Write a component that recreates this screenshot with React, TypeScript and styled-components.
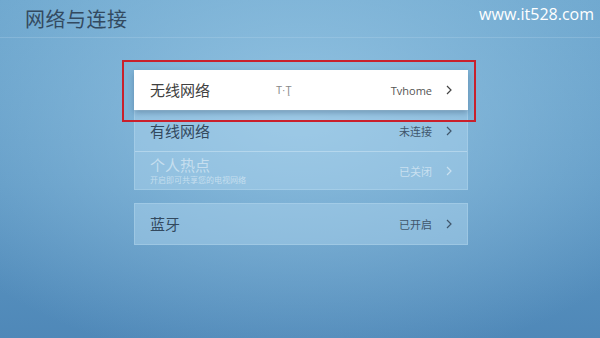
import React from 'react';
import styled, { createGlobalStyle } from 'styled-components';

const GlobalStyle = createGlobalStyle`
  html, body {
    margin: 0;
    padding: 0;
  }
  body {
    font-family: "Noto Sans CJK SC", "Noto Sans", sans-serif;
  }
`;

const Screen = styled.div`
  position: relative;
  width: 600px;
  height: 338px;
  overflow: hidden;
  display: flex;
  flex-direction: column;
  background:
    radial-gradient(ellipse 420px 260px at 300px 110px, rgba(150, 198, 228, 0.9), rgba(150, 198, 228, 0) 100%),
    linear-gradient(180deg, #6aa4cc 0%, #5d97c3 55%, #4f88b8 100%);
`;

const Header = styled.div`
  height: 38px;
  padding: 0 0 0 25px;
  display: flex;
  align-items: center;
  border-bottom: 1px solid rgba(190, 220, 240, 0.25);
  box-sizing: border-box;
`;

const Title = styled.h1`
  margin: 0;
  font-size: 20px;
  font-weight: 400;
  color: #334a60;
  letter-spacing: 0.5px;
`;

const Watermark = styled.div`
  position: absolute;
  top: 3px;
  right: 6px;
  font-family: "Open Sans", "Liberation Sans", sans-serif;
  font-size: 16px;
  color: #ffffff;
`;

const List = styled.div`
  width: 334px;
  margin: 32px 0 0 134px;
  display: flex;
  flex-direction: column;
`;

const FocusItem = styled.div`
  position: relative;
  z-index: 2;
  height: 40px;
  display: flex;
  align-items: center;
  padding: 0 16px;
  background: #ffffff;
  box-shadow: 0 3px 6px rgba(40, 70, 100, 0.35);

  &::after {
    content: '';
    position: absolute;
    top: -10px;
    left: -12px;
    right: -8px;
    bottom: -12px;
    border: 2px solid #c9202c;
  }
`;

const Card = styled.div<{ $gap?: number }>`
  margin-top: ${(p) => p.$gap ?? 0}px;
  background: rgba(170, 210, 235, 0.5);
  border: 1px solid rgba(200, 228, 245, 0.3);
  display: flex;
  flex-direction: column;
`;

const Row = styled.div<{ $h: number; $divider?: boolean }>`
  height: ${(p) => p.$h}px;
  display: flex;
  align-items: center;
  padding: 0 15px;
  border-bottom: ${(p) => (p.$divider ? '1px solid rgba(210, 232, 246, 0.5)' : 'none')};
`;

const LabelBlock = styled.div`
  display: flex;
  flex-direction: column;
  flex: 1;
`;

const Label = styled.span<{ $tone: 'dark' | 'normal' | 'faded' }>`
  font-size: 15px;
  line-height: 18px;
  color: ${(p) => (p.$tone === 'dark' ? '#404040' : p.$tone === 'faded' ? 'rgba(215, 232, 244, 0.75)' : '#33495e')};
`;

const Hint = styled.span`
  font-size: 8px;
  line-height: 10px;
  margin-top: 1px;
  color: rgba(215, 232, 244, 0.75);
`;

const Signal = styled.span`
  position: absolute;
  left: 142px;
  font-family: "Liberation Sans", sans-serif;
  font-size: 10px;
  color: #888;
`;

const Value = styled.span<{ $tone: 'dark' | 'normal' | 'faded' }>`
  font-size: 11px;
  font-family: ${(p) => (p.$tone === 'dark' ? '"Open Sans", "Liberation Sans", sans-serif' : 'inherit')};
  color: ${(p) => (p.$tone === 'dark' ? '#555' : p.$tone === 'faded' ? 'rgba(215, 232, 244, 0.8)' : '#40566b')};
  margin-right: 14px;
`;

const Chevron = ({ color }: { color: string }) => (
  <svg width={6} height={10} viewBox="0 0 6 10">
    <polyline points="1,1 5,5 1,9" fill="none" stroke={color} strokeWidth={1.2} />
  </svg>
);

const App: React.FC = () => {
  return (
    <Screen>
      <GlobalStyle />
      <Header>
        <Title>网络与连接</Title>
      </Header>
      <Watermark>www.it528.com</Watermark>
      <List>
        <FocusItem>
          <Label $tone="dark" style={{ flex: 1 }}>无线网络</Label>
          <Signal>T·Ţ</Signal>
          <Value $tone="dark">Tvhome</Value>
          <Chevron color="#444" />
        </FocusItem>
        <Card>
          <Row $h={40} $divider>
            <LabelBlock>
              <Label $tone="normal">有线网络</Label>
            </LabelBlock>
            <Value $tone="normal">未连接</Value>
            <Chevron color="#40566b" />
          </Row>
          <Row $h={37}>
            <LabelBlock>
              <Label $tone="faded">个人热点</Label>
              <Hint>开启即可共享您的电视网络</Hint>
            </LabelBlock>
            <Value $tone="faded">已关闭</Value>
            <Chevron color="rgba(215, 232, 244, 0.8)" />
          </Row>
        </Card>
        <Card $gap={13}>
          <Row $h={40}>
            <LabelBlock>
              <Label $tone="normal">蓝牙</Label>
            </LabelBlock>
            <Value $tone="normal">已开启</Value>
            <Chevron color="#40566b" />
          </Row>
        </Card>
      </List>
    </Screen>
  );
};

export default App;
